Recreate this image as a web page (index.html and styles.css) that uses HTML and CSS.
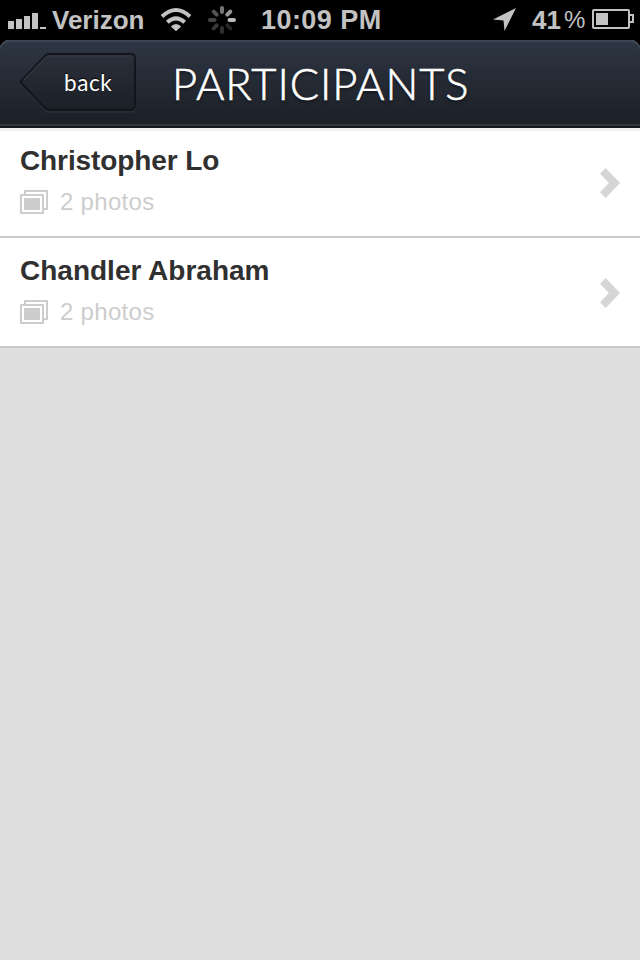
FILE: index.html
```
<!DOCTYPE html>
<html lang="en">
<head>
<meta charset="utf-8">
<title>Participants</title>
<link rel="stylesheet" href="styles.css">
</head>
<body>
<div class="status">
  <svg class="signal" width="40" height="40" fill="#c2c2c2"><path d="M8 21h6v8H8zM16 19h6v10h-6zM24 16h6v13h-6zM32 13h6v16h-6zM40 27h6v2h-6z"/></svg>
  <span class="carrier">Verizon</span>
  <svg class="wifi" width="32" height="40" viewBox="160 0 32 40" fill="none" stroke="#c2c2c2" stroke-width="4"><path d="M162 16.500Q176 3.500 190 16.500M167.300 22.300Q176 14.500 184.700 22.300"/><path d="M170.800 26.500Q176 21.500 181.200 26.500L176 31.300z" fill="#c2c2c2" stroke="none"/></svg>
  <svg class="spinner" width="30" height="40" viewBox="207 0 30 40" stroke-width="4" stroke-linecap="round"><path stroke="#757575" d="M222 8v4"/><path stroke="#969696" d="M230.300 11.700l-3 3"/><path stroke="#bababa" d="M234 20h-4.500"/><path stroke="#272727" d="M230.300 28.300l-3-3"/><path stroke="#303030" d="M222 32v-4"/><path stroke="#383838" d="M213.700 28.300l3-3"/><path stroke="#444" d="M210 20h4.500"/><path stroke="#555" d="M213.700 11.700l3 3"/></svg>
  <span class="time">10:09 PM</span>
  <svg class="arrow" width="26" height="40" viewBox="492 0 26 40" fill="#c2c2c2"><path d="M516 8L504.500 31L503.500 20.500L493 19.500z"/></svg>
  <span class="charge">41</span><span class="percent">%</span>
  <svg class="battery" width="44" height="40" viewBox="592 0 44 40" fill="none" stroke="#c2c2c2" stroke-width="2"><rect x="593" y="10" width="36" height="18" rx="1"/><path d="M630 15h3v7h-3"/><path d="M596 13h12v12h-12z" fill="#c2c2c2" stroke="none"/></svg>
</div>
<header class="navbar">
  <a class="back">
    <svg class="back-shape" width="120" height="62" viewBox="18 51 120 62">
      <defs><linearGradient id="fill" x1="0" y1="0" x2="0" y2="1"><stop offset="0" stop-color="#2a303b"/><stop offset="1" stop-color="#1b1f26"/></linearGradient></defs>
      <path d="M48 56H132Q135 56 135 59V109Q135 112 132 112H49Q47 112 45 110L22 86Q20 83.500 22 81" fill="none" stroke="#2d323a" stroke-width="1.500"/>
      <path d="M49 54H131Q135 54 135 58V106Q135 110 131 110H49Q47 110 45 108L22 84Q20 82 22 80L45 56Q47 54 49 54z" fill="url(#fill)" stroke="#12161c" stroke-width="2"/>
      <path d="M24 80L46 57Q47.500 56 49 56H132" fill="none" stroke="#303742" stroke-width="1.500"/>
    </svg>
    <span class="back-label">back</span>
  </a>
  <h1 class="title">PARTICIPANTS</h1>
</header>
<main class="list">
  <div class="row">
    <div class="info">
      <h2 class="name name-first">Christopher Lo</h2>
      <div class="meta"><svg width="28" height="24" fill="none" stroke="#cdcdcd" stroke-width="2"><path d="M5 4V1h22v18h-3"/><path d="M1 5h22v18H1z"/><path d="M4 8h16v12H4z" fill="#cdcdcd" stroke="none"/></svg><span>2 photos</span></div>
    </div>
    <svg class="chevron" width="20" height="30"><path d="M5.700 0L20 15L5.700 30L0 24.300L8.900 15L0 5.700z" fill="#d5d5d5"/></svg>
  </div>
  <div class="row">
    <div class="info">
      <h2 class="name">Chandler Abraham</h2>
      <div class="meta"><svg width="28" height="24" fill="none" stroke="#cdcdcd" stroke-width="2"><path d="M5 4V1h22v18h-3"/><path d="M1 5h22v18H1z"/><path d="M4 8h16v12H4z" fill="#cdcdcd" stroke="none"/></svg><span>2 photos</span></div>
    </div>
    <svg class="chevron" width="20" height="30"><path d="M5.700 0L20 15L5.700 30L0 24.300L8.900 15L0 5.700z" fill="#d5d5d5"/></svg>
  </div>
</main>
</body>
</html>
```
FILE: styles.css
```
* { box-sizing: border-box; }
body { margin: 0; min-height: 960px; background: #dfdfdf; font-family: "Liberation Sans", Arial, sans-serif; }
svg { display: block; flex: none; overflow: visible; }
.status {
  display: grid;
  grid-template-columns: 52px 108px 47px 54px 231px 40px 32px 28px 48px;
  height: 40px;
  background: #000;
  color: #c2c2c2;
  font-size: 26px;
  font-weight: bold;
  line-height: 40px;
  white-space: nowrap;
}
.time { font-size: 27px; letter-spacing: 0.45px; }
.percent { font-size: 24px; font-weight: normal; }
.navbar {
  display: flex;
  height: 88px;
  padding-left: 18px;
  border-bottom: 2px solid #15181d;
  border-radius: 9px 9px 0 0;
  background: linear-gradient(#2e3643, #1b1f26);
  box-shadow: 0 -9px 0 #000, inset 0 2px 0 #3b4655, inset 0 -2px 0 #32373f;
}
.back { display: grid; width: 120px; height: 62px; margin-top: 11px; color: #fff; }
.back-shape, .back-label { grid-area: 1 / 1; }
.back-label { z-index: 1; padding: 17px 0 0 46px; font: 22.5px/30px Lato, sans-serif; letter-spacing: 0.6px; text-shadow: 0 -1px 1px #000; }
.title {
  margin: 13px 0 0 34px;
  color: #fff;
  font: 300 43.5px/60px Lato, sans-serif;
  letter-spacing: 0.9px;
  text-shadow: 0 2px 3px #0008;
  -webkit-text-stroke: 0.6px #fff;
  white-space: nowrap;
}
.list { display: block; }
.row {
  display: flex;
  justify-content: space-between;
  height: 110px;
  padding: 17px 20px 0;
  border-bottom: 2px solid #cbcbcb;
  background: #fff;
}
.row:first-child { box-shadow: inset 0 3px 0 #f1f1f1; }
.name { margin: 0; color: #303030; font-size: 28px; line-height: 32px; white-space: nowrap; }
.name-first { letter-spacing: -0.1px; }
.meta { display: flex; gap: 12px; align-items: center; margin-top: 11px; height: 28px; color: #cdcdcd; font-size: 24px; line-height: 28px; letter-spacing: 0.3px; }
.chevron { margin-top: 23px; }
```
